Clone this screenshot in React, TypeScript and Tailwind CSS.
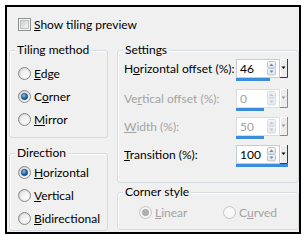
import React from "react";

function Radio({ checked, disabled }: { checked?: boolean; disabled?: boolean }) {
  const stroke = disabled ? "#c4c4c4" : "#8a8b8c";
  return (
    <svg width="13" height="13" viewBox="0 0 13 13" className="shrink-0">
      <defs>
        <linearGradient id="rgEn" x1="0" y1="0" x2="1" y2="1">
          <stop offset="0" stopColor="#c9c9c9" />
          <stop offset="1" stopColor="#fbfbfb" />
        </linearGradient>
        <linearGradient id="rgIn" x1="0" y1="0" x2="1" y2="1">
          <stop offset="0" stopColor="#e6e6e6" />
          <stop offset="1" stopColor="#ffffff" />
        </linearGradient>
        <radialGradient id="rgDot" cx="0.4" cy="0.35" r="0.7">
          <stop offset="0" stopColor="#8cc6f2" />
          <stop offset="0.55" stopColor="#2b6fb0" />
          <stop offset="1" stopColor="#15416f" />
        </radialGradient>
      </defs>
      <circle cx="6.5" cy="6.5" r="6" fill={disabled ? "#f4f4f4" : "url(#rgEn)"} stroke={stroke} />
      <circle cx="6.5" cy="6.5" r="4.3" fill={disabled ? "#f7f7f7" : "url(#rgIn)"} />
      {checked && (
        <circle cx="6.5" cy="6.5" r="3.2" fill={disabled ? "#b0b0b0" : "url(#rgDot)"} stroke={disabled ? "#9c9c9c" : "#173f6a"} strokeWidth="0.6" />
      )}
    </svg>
  );
}

function Checkbox() {
  return (
    <svg width="13" height="13" viewBox="0 0 13 13" className="shrink-0">
      <defs>
        <linearGradient id="cbG" x1="0" y1="0" x2="1" y2="1">
          <stop offset="0" stopColor="#cbcbcb" />
          <stop offset="1" stopColor="#f6f6f6" />
        </linearGradient>
      </defs>
      <rect x="0.5" y="0.5" width="12" height="12" fill="#f4f4f4" stroke="#8e8f8f" />
      <rect x="2.5" y="2.5" width="8" height="8" fill="url(#cbG)" stroke="#c0c0c0" />
    </svg>
  );
}

function Spinner({ disabled }: { disabled?: boolean }) {
  const stroke = disabled ? "#d8dde3" : "#b9c6d4";
  const arrow = disabled ? "#bcc5cf" : "#6c86a3";
  return (
    <svg width="9" height="15" viewBox="0 0 9 15" className="shrink-0">
      <defs>
        <linearGradient id="spG" x1="0" y1="0" x2="0" y2="1">
          <stop offset="0" stopColor="#f3f6f9" />
          <stop offset="1" stopColor="#dfe6ed" />
        </linearGradient>
      </defs>
      <rect x="0.5" y="0.5" width="8" height="6.5" rx="1" fill="url(#spG)" stroke={stroke} />
      <rect x="0.5" y="7.5" width="8" height="6.5" rx="1" fill="url(#spG)" stroke={stroke} />
      <path d="M2.5 5 L4.5 2.5 L6.5 5 Z" fill={arrow} />
      <path d="M2.5 9.5 L4.5 12 L6.5 9.5 Z" fill={arrow} />
    </svg>
  );
}

function DropButton({ disabled }: { disabled?: boolean }) {
  return (
    <svg width="8" height="19" viewBox="0 0 8 19" className="shrink-0">
      <rect x="0" y="0" width="8" height="19" fill="#ececec" />
      <path d="M0.5 18.5 L0.5 0.5 L7 0.5" stroke="#ffffff" fill="none" />
      <path d="M0 18.5 L7.5 18.5 L7.5 0" stroke={disabled ? "#8a8a8a" : "#3c3c3c"} fill="none" />
      <path d="M1.5 7.5 L5.5 7.5 L3.5 10 Z" fill={disabled ? "#9a9a9a" : "#000000"} />
    </svg>
  );
}

function Spin({ value, disabled, bar }: { value: string; disabled?: boolean; bar: number }) {
  return (
    <div className="flex flex-col w-[52px]">
      <div className="flex h-[19px]">
        <div className={`flex flex-1 items-center bg-white border ${disabled ? "border-[#d9dde2]" : "border-[#c5cbd2]"} pl-[3px] pr-[3px]`}>
          <span className={`leading-[15px] ${disabled ? "text-[#a3a3a3]" : "text-black"}`}>{value}</span>
          <div className="ml-auto flex">
            <Spinner disabled={disabled} />
          </div>
        </div>
        <DropButton disabled={disabled} />
      </div>
      <div className="h-[3px] bg-[#3a8ddd]" style={{ width: bar }} />
    </div>
  );
}

function Group({ label, className, children }: { label: string; className: string; children?: React.ReactNode }) {
  return (
    <div className={`relative border border-[#d5dbe0] rounded-[3px] shadow-[inset_1px_1px_0_#ffffff] ${className}`}>
      <span className="absolute left-[5px] top-[-8px] px-[2px] bg-[#f0f0f0] leading-[14px] whitespace-nowrap">{label}</span>
      {children}
    </div>
  );
}

function RadioRow({ checked, disabled, children }: { checked?: boolean; disabled?: boolean; children: React.ReactNode }) {
  return (
    <div className={`flex items-center h-[13px] gap-[3px] leading-[13px] whitespace-nowrap ${disabled ? "text-[#a3a3a3]" : "text-black"}`}>
      <Radio checked={checked} disabled={disabled} />
      <span>{children}</span>
    </div>
  );
}

function SettingRow({ label, disabled, value, bar, className }: { label: React.ReactNode; disabled?: boolean; value: string; bar: number; className?: string }) {
  return (
    <div className={`flex items-start ${className ?? ""}`}>
      <div className={`w-[112px] leading-[19px] whitespace-nowrap ${disabled ? "text-[#a3a3a3]" : "text-black"}`}>{label}</div>
      <Spin value={value} disabled={disabled} bar={bar} />
    </div>
  );
}

export default function App() {
  return (
    <div className="w-[307px] h-[240px] bg-white pt-[5px] pl-[5px] font-['Lato',sans-serif] text-[12px] text-black">
      <div className="w-[296px] h-[229px] border-2 border-black bg-[#f0f0f0] pt-[11px]">
        <div className="flex items-center h-[13px] pl-[11px] gap-[3px] leading-[13px]">
          <Checkbox />
          <span>
            <u>S</u>how tiling preview
          </span>
        </div>
        <div className="flex mt-[19px] pl-[2px] gap-[9px]">
          <div className="w-[99px] flex flex-col">
            <Group label="Tiling method" className="h-[88px] pt-[16px] pl-[8px]">
              <div className="flex flex-col gap-[10px]">
                <RadioRow>
                  <u>E</u>dge
                </RadioRow>
                <RadioRow checked>
                  C<u>o</u>rner
                </RadioRow>
                <RadioRow>
                  <u>M</u>irror
                </RadioRow>
              </div>
            </Group>
            <Group label="Direction" className="mt-[15px] h-[78px] pt-[12px] pl-[8px]">
              <div className="flex flex-col gap-[10px]">
                <RadioRow checked>
                  <u>H</u>orizontal
                </RadioRow>
                <RadioRow>
                  <u>V</u>ertical
                </RadioRow>
                <RadioRow>
                  <u>B</u>idirectional
                </RadioRow>
              </div>
            </Group>
          </div>
          <div className="w-[182px] flex flex-col">
            <Group label="Settings" className="h-[133px] pt-[8px] pl-[6px]">
              <SettingRow
                label={
                  <>
                    H<u>o</u>rizontal offset (%):
                  </>
                }
                value="46"
                bar={34}
              />
              <SettingRow
                className="mt-[8px]"
                disabled
                label={
                  <>
                    Ve<u>r</u>tical offset (%):
                  </>
                }
                value="0"
                bar={28}
              />
              <SettingRow
                className="mt-[6px]"
                disabled
                label={
                  <>
                    <u>W</u>idth (%):
                  </>
                }
                value="50"
                bar={28}
              />
              <SettingRow
                className="mt-[6px]"
                label={
                  <>
                    <u>T</u>ransition (%):
                  </>
                }
                value="100"
                bar={52}
              />
            </Group>
            <Group label="Corner style" className="mt-[9px] h-[38px] pt-[13px] pl-[21px]">
              <div className="flex">
                <div className="w-[84px]">
                  <RadioRow checked disabled>
                    <u>L</u>inear
                  </RadioRow>
                </div>
                <RadioRow disabled>
                  C<u>u</u>rved
                </RadioRow>
              </div>
            </Group>
          </div>
        </div>
      </div>
    </div>
  );
}
